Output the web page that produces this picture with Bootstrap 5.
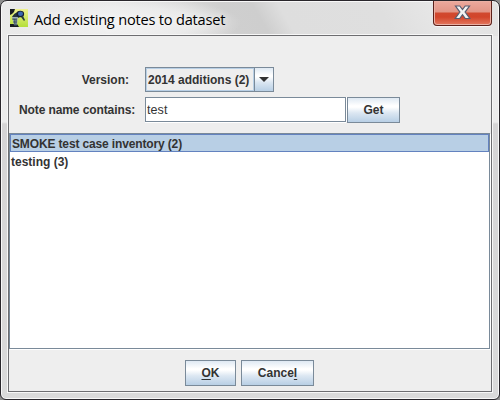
<!DOCTYPE html>
<html lang="en">
<head>
<meta charset="utf-8">
<title>Add existing notes to dataset</title>
<link href="https://cdn.jsdelivr.net/npm/bootstrap@5.3.0/dist/css/bootstrap.min.css" rel="stylesheet">
<style>
body{width:500px;height:400px;background:#8d8d8d;font:bold 12px/16px "Liberation Sans",Arial,sans-serif;color:#333}
.win{width:500px;height:400px;border:1px solid #29262b;border-radius:7px 7px 6px 6px;box-shadow:inset 0 0 0 1px #f8f8f8;
 background:radial-gradient(ellipse 115px 26px at 125px 22px,rgba(244,244,244,.9) 0,rgba(240,240,240,.7) 60%,transparent 100%) 0 0/100% 35px no-repeat,
 linear-gradient(60deg,#eaeaea 0,#e6e6e6 25%,#dadada 38%,#cfcfcf 46%,#cecece 52%,#dedede 57%,#dfdfdf 76%,#e6e6e6 86%,#e2e2e2 100%) 0 0/100% 35px no-repeat,
 linear-gradient(180deg,#e9e9e9 0,#ececec 121px,#d5d4d5 123px,#dadada 100%)}
.titlebar{height:34px;padding:0 7px 0 9px}
.title-text{font:400 14.6px/20px "Open Sans","Noto Sans",sans-serif;letter-spacing:-.21px;color:#000;margin:8px 0 0 6px;text-shadow:0 0 8px #fff;white-space:nowrap}
.app-icon{margin-top:8px;width:18px;height:18px}
.close-btn{width:59px;height:25px;padding:0;border:1px solid #5c211b;border-top:0;border-radius:0 0 4px 4px;box-shadow:inset 0 0 0 1px #eab0a4,0 1px 0 #f7f7f7;background:linear-gradient(#eba99d 0,#e29586 11px,#d1492f 12px,#d2452b 16px,#e57e65 25px)}
.pane{margin:0 7px;width:484px;height:357px;border:1px solid #6d6d70;box-shadow:0 0 0 1px #f7f7f7;background:#eee;padding-top:31px}
.form-line{padding-left:9px}
.name-line{margin-top:5px}
.caption-cell{width:127px;white-space:nowrap}
.caption-note{padding:5px 0 0 1px;letter-spacing:-.1px}
.combo{width:129px;height:25px;border:1px solid #7a8a99}
.combo-text{width:108px;border:1px solid #b8cfe5;padding-left:1px;line-height:22px;white-space:nowrap}
.metal{background:linear-gradient(#dfe9f3 0,#fff 32%,#fff 38%,#dce7f2 62%,#b8cfe5 100%)}
.combo-arrow{width:19px;border-left:1px solid #7a8a99}
.field{width:201px;height:25px;border:1px solid #7a8a99;background:#fff;box-shadow:0 1px 0 #fff,1px 0 0 #fff;border-radius:0;padding:0 0 0 1px;font:400 12.5px/23px "Liberation Sans",Arial,sans-serif;letter-spacing:.1px;color:#333;outline:0}
.push{height:26px;border:1px solid #7a8a99;border-radius:0;padding:0;font:inherit;color:#333;line-height:24px}
.push u{text-underline-offset:2px;text-decoration-thickness:1px}
.get-btn{width:53px;margin-left:1px}
.notes{width:481px;height:216px;margin-top:10px;border:1px solid #7a8a99;background:#fff;box-shadow:1px 1px 0 #fff;border-radius:0}
.notes .list-group-item{height:18px;padding:1px 1px 0;border:0;line-height:18px;color:#333;background:transparent}
.notes .picked{height:18px;border:1px solid #6382bf;background:#b8cfe5;line-height:17px;letter-spacing:-.14px}
.actions{padding:11px 0 0 176px;gap:5px}
.ok-btn{width:51px}
.cancel-btn{width:73px}
</style>
<script src="https://cdn.jsdelivr.net/npm/bootstrap@5.3.0/dist/js/bootstrap.bundle.min.js"></script>
</head>
<body class="overflow-hidden m-0">
<main class="win overflow-hidden">
 <header class="titlebar d-flex align-items-start">
  <svg class="app-icon flex-shrink-0" viewBox="0 0 18 18"><defs><linearGradient id="lime" x2="0" y2="1"><stop stop-color="#f0f290"/><stop offset="1" stop-color="#b4df3a"/></linearGradient></defs><path fill="url(#lime)" d="M0 0h18v18H0z"/><path fill="#171c20" d="M0 0h5L4 3 2 5 0 6zM0 15h7l2 3H0z"/><path d="M2 8Q4 4 8 3l4 4-4 2z" fill="#24343b"/><path d="M2 8l6 0-1 8H4z" fill="#9caeb8"/><path d="M2 10l5 1m-4 2 4 0m-3 3h3M4 9l1 8M6 9v8" stroke="#354a58" stroke-width=".8"/><ellipse cx="10.3" cy="5" rx="3.8" ry="3.2" fill="#151e31"/><ellipse cx="10.5" cy="4.8" rx="2.5" ry="2.2" fill="#3b69b2"/><path d="M13 7l2 4-1 1-3-4z" fill="#263b3b"/></svg>
  <div class="title-text">Add existing notes to dataset</div>
  <button class="close-btn ms-auto d-flex justify-content-center" aria-label="Close"><svg width="17" height="15" viewBox="0 0 17 15" style="margin-top:4px"><path d="M1.5 1h4.3l2.7 3.6L11.2 1h4.3l-4.4 6.1 4.7 6.4h-4.5L8.5 9.7l-2.8 3.8H1.2l4.7-6.4z" fill="#f3f3f3" stroke="#575d70" stroke-width="1.2"/></svg></button>
 </header>
 <section class="pane d-flex flex-column">
  <div class="form-line d-flex align-items-center">
   <div class="caption-cell text-end pe-3">Version:</div>
   <div class="combo d-flex"><div class="combo-text">2014 additions (2)</div><div class="combo-arrow metal d-flex align-items-center justify-content-center"><svg width="10" height="5" viewBox="0 0 10 5"><path d="M0 0h10L5 5z" fill="#333"/></svg></div></div>
  </div>
  <div class="form-line name-line d-flex">
   <div class="caption-cell caption-note">Note name contains:</div>
   <input class="field" value="test" aria-label="Note name contains">
   <button class="push metal get-btn">Get</button>
  </div>
  <div class="notes list-group"><div class="list-group-item picked">SMOKE test case inventory (2)</div><div class="list-group-item">testing (3)</div></div>
  <div class="actions d-flex"><button class="push metal ok-btn"><u>O</u>K</button><button class="push metal cancel-btn">Cance<u>l</u></button></div>
 </section>
</main>
</body>
</html>
